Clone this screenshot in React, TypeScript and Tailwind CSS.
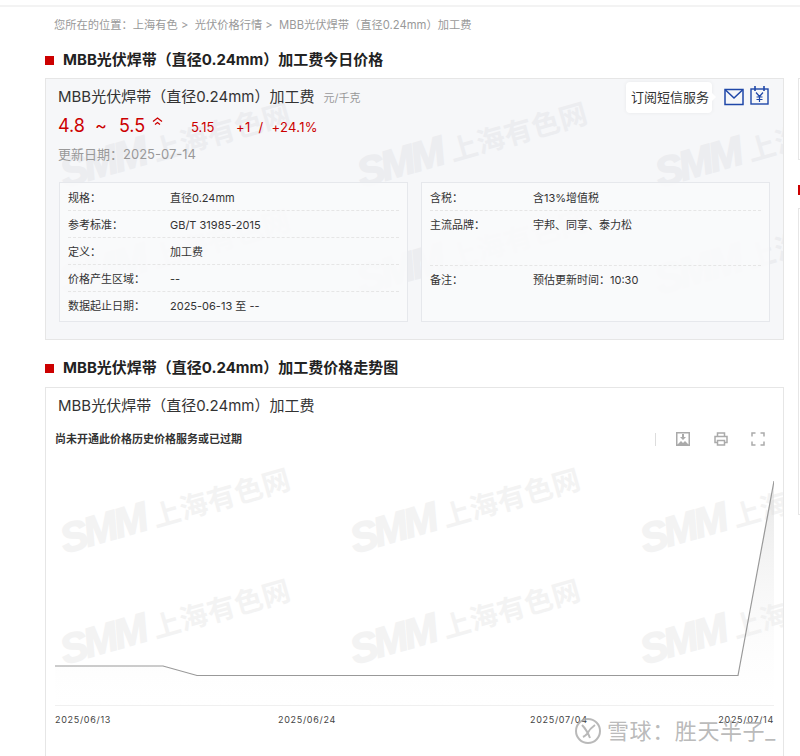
import React from 'react';

const FONT = 'font-["Inter","Noto_Sans_CJK_SC",sans-serif]';

const Watermark: React.FC<{ x: number; y: number; color: string }> = ({ x, y, color }) => (
  <div
    className={`absolute flex items-baseline gap-2 whitespace-nowrap ${color} origin-left -rotate-[16deg] pointer-events-none`}
    style={{ left: x, top: y }}
  >
    <span className='font-["Liberation_Sans",sans-serif] font-black italic text-[41px] leading-none tracking-[-3px] [-webkit-text-stroke:1.5px_currentColor]'>SMM</span>
    <span className='font-["Noto_Sans_CJK_SC",sans-serif] font-bold text-[28px] leading-none tracking-[0.5px]'>上海有色网</span>
  </div>
);

const SectionTitle: React.FC<{ children: React.ReactNode }> = ({ children }) => (
  <h2 className="flex items-center h-[24px] text-[15px] font-bold text-[#222] whitespace-nowrap">
    <span className="w-[9px] h-[9px] bg-[#cc0000] mr-[9px]" />
    {children}
  </h2>
);

const Row: React.FC<{ label: string; value: string; h: string; last?: boolean; x: string }> = ({ label, value, h, last, x }) => (
  <div className={`flex ${h} ${last ? '' : 'border-b border-dashed border-[#e6e6e6]'}`}>
    <span className={`${x} pt-[5px] leading-[18px]`}>{label}</span>
    <span className="pt-[5px] leading-[18px]">{value}</span>
  </div>
);

const App: React.FC = () => {
  return (
    <div className={`${FONT} relative w-[800px] h-[756px] overflow-hidden bg-white`}>
      <div className="h-[5px]" />
      <div className="h-[2px] bg-[#f3f3f3]" />

      <div className="flex">
        <div className="ml-[45px] w-[739px] shrink-0">
          <div className="h-[36px] pl-[9px] pt-[9px] text-[11.25px] leading-[18px] text-[#999] whitespace-nowrap">
            您所在的位置：上海有色 &gt;&nbsp; 光伏价格行情 &gt;&nbsp; MBB光伏焊带（直径0.24mm）加工费
          </div>

          <div className="pt-[5px] h-[35px]">
            <SectionTitle>MBB光伏焊带（直径0.24mm）加工费今日价格</SectionTitle>
          </div>

          {/* price card */}
          <section className="relative h-[262px] overflow-hidden border border-[#e6e6e6] bg-[#f6f7f9] pl-[12px] pr-[13px]">
            <Watermark color="text-[#ecedf0]" x={15} y={75} />
            <Watermark color="text-[#ecedf0]" x={312} y={75} />
            <Watermark color="text-[#ecedf0]" x={610} y={75} />
            <Watermark color="text-[#ecedf0]" x={15} y={182} />
            <Watermark color="text-[#ecedf0]" x={312} y={182} />
            <Watermark color="text-[#ecedf0]" x={610} y={182} />

            <div className="relative flex justify-between h-[33px]">
              <div className="pt-[5px] whitespace-nowrap">
                <span className="text-[15px] leading-[26px] text-[#333]">MBB光伏焊带（直径0.24mm）加工费</span>
                <span className="ml-[9px] text-[11px] text-[#999]">元/千克</span>
              </div>
              <div className="flex items-start pt-[3px]">
                <div className="relative flex items-center h-[31px] pl-[5px] pr-[3px] bg-white rounded-sm shadow-[0_0_4px_rgba(0,0,0,0.06)] text-[13px] text-[#333] whitespace-nowrap">
                  订阅短信服务
                  <span className="absolute -right-[4px] top-[11px] w-0 h-0 border-y-[4px] border-y-transparent border-l-[4px] border-l-white" />
                </div>
                <svg className="ml-[12px] mt-[6px]" width="20" height="18" viewBox="0 0 20 18" fill="none" stroke="#1f47a8" strokeWidth="1.5">
                  <rect x="1" y="1.5" width="18" height="15" />
                  <path d="M1.5 2l8.500 8 8.500-8" />
                </svg>
                <svg className="ml-[6px] mt-[4px] mr-[1px]" width="19" height="19" viewBox="0 0 19 19" fill="none" stroke="#1f47a8" strokeWidth="1.4">
                  <rect x="1" y="3" width="17" height="15" />
                  <path d="M5 0v5M14 0v5" strokeWidth="1.6" />
                  <path d="M6 6.500l3.500 4 3.500-4M9.500 10.500V16M6.500 11h6M6.500 13.500h6" strokeWidth="1.200" />
                </svg>
              </div>
            </div>

            <div className="relative flex items-baseline h-[29px] text-[#cc0000] whitespace-nowrap">
              <span className="flex text-[18px] leading-[28px] w-[94px]">
                <span>4.8</span>
                <span className="ml-[10px]">~</span>
                <span className="ml-[12px]">5.5</span>
              </span>
              <svg className="self-start mt-[5px]" width="11" height="8" viewBox="0 0 11 8" fill="none" stroke="#cc0000" strokeWidth="1.300">
                <path d="M1 4.500l4.500-3.500L10 4.500M3 7.500l2.500-2L8 7.500" />
              </svg>
              <span className="ml-[28px] text-[13px] w-[45px]">5.15</span>
              <span className="flex gap-[8px] text-[13px] tracking-[0.3px]">
                <span>+1</span>
                <span>/</span>
                <span>+24.1%</span>
              </span>
            </div>

            <div className="relative h-[41px] pt-[3px] text-[13px] leading-[20px] text-[#999]">更新日期：2025-07-14</div>

            <div className="relative ml-px grid grid-cols-2 gap-[13px] text-[11px] text-[#333]">
              <div className="h-[140px] border border-[#e6e8ec] bg-[#fafafb]/90 px-[8px] pt-px">
                <Row x="w-[102px]" h="h-[27px]" label="规格：" value="直径0.24mm" />
                <Row x="w-[102px]" h="h-[27px]" label="参考标准：" value="GB/T 31985-2015" />
                <Row x="w-[102px]" h="h-[27px]" label="定义：" value="加工费" />
                <Row x="w-[102px]" h="h-[27px]" label="价格产生区域：" value="--" />
                <Row x="w-[102px]" h="h-[27px]" last label="数据起止日期：" value="2025-06-13 至 --" />
              </div>
              <div className="h-[140px] border border-[#e6e8ec] bg-[#fafafb]/90 px-[8px] pt-px">
                <Row x="w-[103px]" h="h-[27px]" label="含税：" value="含13%增值税" />
                <Row x="w-[103px]" h="h-[55px]" label="主流品牌：" value="宇邦、同享、泰力松" />
                <Row x="w-[103px]" h="h-[54px]" last label="备注：" value="预估更新时间：10:30" />
              </div>
            </div>
          </section>

          <div className="pt-[16px] h-[47px]">
            <SectionTitle>MBB光伏焊带（直径0.24mm）加工费价格走势图</SectionTitle>
          </div>

          {/* trend chart */}
          <section className="relative h-[400px] overflow-hidden border border-[#e6e6e6] bg-white">
            <div className="h-[36px] pl-[12px] pt-[5px] text-[15px] leading-[26px] text-[#333]">MBB光伏焊带（直径0.24mm）加工费</div>
            <div className="relative flex items-center justify-between h-[30px] pl-[9px] pr-[18px]">
              <span className="text-[11px] font-bold text-[#333]">尚未开通此价格历史价格服务或已过期</span>
              <div className="flex items-center">
                <span className="w-px h-[13px] bg-[#ddd] mr-[20px]" />
                <svg width="14" height="14" viewBox="0 0 14 14" className="mr-[24px]" fill="#aaa">
                  <path d="M0 0h14v14H0zM1.500 1.500v11h11v-11z" fillRule="evenodd" />
                  <path d="M6 2h2v3h2L7 8 4 5h2zM1 13l4-4 2 2 2-2 4 4z" />
                </svg>
                <svg width="14" height="14" viewBox="0 0 14 14" className="mr-[23px]" fill="none" stroke="#aaa" strokeWidth="1.500">
                  <path d="M3.500 4V1h7v3M3 10.500H1V4.500h12v6h-2" />
                  <path d="M3.500 8.500h7V13h-7z" />
                </svg>
                <svg width="14" height="14" viewBox="0 0 14 14" fill="none" stroke="#aaa" strokeWidth="1.500">
                  <path d="M1 4.500V1h3.500M9.500 1H13v3.500M13 9.500V13H9.500M4.500 13H1V9.500" />
                </svg>
              </div>
            </div>

            <div className="relative mx-[9px] mt-[17px] h-[235px] border-b border-[#eeeeee]">
              <Watermark color="text-[#f3f3f3]" x={6} y={49} />
              <Watermark color="text-[#f3f3f3]" x={296} y={49} />
              <Watermark color="text-[#f3f3f3]" x={586} y={49} />
              <Watermark color="text-[#f3f3f3]" x={6} y={160} />
              <Watermark color="text-[#f3f3f3]" x={296} y={160} />
              <Watermark color="text-[#f3f3f3]" x={586} y={160} />
              <svg className="absolute inset-0" width="719" height="235" viewBox="0 0 719 235">
                <defs>
                  <linearGradient id="area" x1="0" y1="10" x2="0" y2="235" gradientUnits="userSpaceOnUse">
                    <stop offset="0" stopColor="#d4d4d4" />
                    <stop offset="1" stopColor="#ffffff" stopOpacity="0.2" />
                  </linearGradient>
                </defs>
                <path d="M0 195H108L142 204.500H683L719 10V235H0Z" fill="url(#area)" fillOpacity="0.55" />
                <path d="M0 195H108L142 204.500H683L719 10" fill="none" stroke="#999" strokeWidth="1.200" />
              </svg>
            </div>

            <div className="relative mx-[9px] h-[30px] pt-[7px] text-[9px] leading-[14px] tracking-[0.7px] text-[#444]">
              <span className="absolute left-0">2025/06/13</span>
              <span className="absolute left-[223px]">2025/06/24</span>
              <span className="absolute left-[475px]">2025/07/04</span>
              <span className="absolute right-0">2025/07/14</span>
            </div>
          </section>
        </div>

        {/* edge of the right column */}
        <div className="ml-[14px] w-[40px] shrink-0 pt-[71px]">
          <div className="h-[82px] border border-[#e6e6e6]" />
          <div className="mt-[25px] h-[10px] bg-[#cc0000]" />
          <div className="mt-[13px] h-[307px] border border-[#e6e6e6]" />
        </div>
      </div>

      {/* xueqiu stamp over the chart */}
      <div className="absolute left-[574px] top-[717px] flex items-center text-[#a8a8a8]/80 whitespace-nowrap">
        <svg width="28" height="28" viewBox="0 0 28 28" fill="none" stroke="#a8a8a8" strokeWidth="2" strokeOpacity="0.8">
          <circle cx="14" cy="14" r="12" />
          <path d="M8 8c3 3 6 8 8 13M21 8c-3 2-6 5-8 9-1 1-2 2-4 3" />
        </svg>
        <span className="ml-[5px] text-[22px] leading-[28px] tracking-[0.6px]">雪球：胜天半子_</span>
      </div>
    </div>
  );
};

export default App;
